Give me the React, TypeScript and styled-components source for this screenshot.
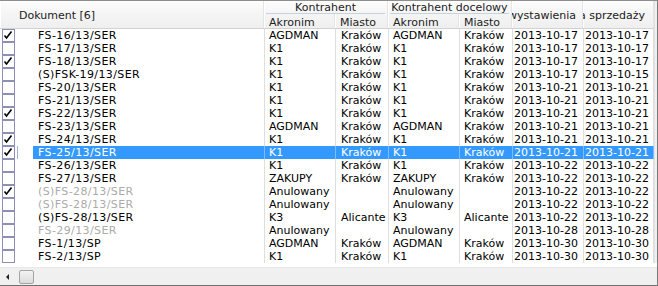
import React from "react";
import styled, { createGlobalStyle, css } from "styled-components";

const GlobalStyle = createGlobalStyle`
  html, body {
    margin: 0;
    padding: 0;
    background: #ffffff;
  }
  body {
    font-family: "DejaVu Sans", Verdana, sans-serif;
    font-size: 11px;
    color: #000;
  }
`;

const COLUMNS = "17px 16px 231px 71px 53px 71px 53px 71px 71px";

type Doc = {
  checked: boolean;
  number: string;
  muted?: boolean;
  acr: string;
  city: string;
  acr2: string;
  city2: string;
  issued: string;
  sold: string;
};

const docs: Doc[] = [
  { checked: true, number: "FS-16/13/SER", acr: "AGDMAN", city: "Kraków", acr2: "AGDMAN", city2: "Kraków", issued: "2013-10-17", sold: "2013-10-17" },
  { checked: false, number: "FS-17/13/SER", acr: "K1", city: "Kraków", acr2: "K1", city2: "Kraków", issued: "2013-10-17", sold: "2013-10-17" },
  { checked: true, number: "FS-18/13/SER", acr: "K1", city: "Kraków", acr2: "K1", city2: "Kraków", issued: "2013-10-17", sold: "2013-10-17" },
  { checked: false, number: "(S)FSK-19/13/SER", acr: "K1", city: "Kraków", acr2: "K1", city2: "Kraków", issued: "2013-10-17", sold: "2013-10-15" },
  { checked: false, number: "FS-20/13/SER", acr: "K1", city: "Kraków", acr2: "K1", city2: "Kraków", issued: "2013-10-21", sold: "2013-10-21" },
  { checked: false, number: "FS-21/13/SER", acr: "K1", city: "Kraków", acr2: "K1", city2: "Kraków", issued: "2013-10-21", sold: "2013-10-21" },
  { checked: true, number: "FS-22/13/SER", acr: "K1", city: "Kraków", acr2: "K1", city2: "Kraków", issued: "2013-10-21", sold: "2013-10-21" },
  { checked: false, number: "FS-23/13/SER", acr: "AGDMAN", city: "Kraków", acr2: "AGDMAN", city2: "Kraków", issued: "2013-10-21", sold: "2013-10-21" },
  { checked: true, number: "FS-24/13/SER", acr: "K1", city: "Kraków", acr2: "K1", city2: "Kraków", issued: "2013-10-21", sold: "2013-10-21" },
  { checked: true, number: "FS-25/13/SER", acr: "K1", city: "Kraków", acr2: "K1", city2: "Kraków", issued: "2013-10-21", sold: "2013-10-21" },
  { checked: false, number: "FS-26/13/SER", acr: "K1", city: "Kraków", acr2: "K1", city2: "Kraków", issued: "2013-10-22", sold: "2013-10-22" },
  { checked: false, number: "FS-27/13/SER", acr: "ZAKUPY", city: "Kraków", acr2: "ZAKUPY", city2: "Kraków", issued: "2013-10-22", sold: "2013-10-22" },
  { checked: true, number: "(S)FS-28/13/SER", muted: true, acr: "Anulowany", city: "", acr2: "Anulowany", city2: "", issued: "2013-10-22", sold: "2013-10-22" },
  { checked: false, number: "(S)FS-28/13/SER", muted: true, acr: "Anulowany", city: "", acr2: "Anulowany", city2: "", issued: "2013-10-22", sold: "2013-10-22" },
  { checked: false, number: "(S)FS-28/13/SER", acr: "K3", city: "Alicante", acr2: "K3", city2: "Alicante", issued: "2013-10-22", sold: "2013-10-22" },
  { checked: false, number: "FS-29/13/SER", muted: true, acr: "Anulowany", city: "", acr2: "Anulowany", city2: "", issued: "2013-10-28", sold: "2013-10-28" },
  { checked: false, number: "FS-1/13/SP", acr: "AGDMAN", city: "Kraków", acr2: "AGDMAN", city2: "Kraków", issued: "2013-10-30", sold: "2013-10-30" },
  { checked: false, number: "FS-2/13/SP", acr: "K1", city: "Kraków", acr2: "K1", city2: "Kraków", issued: "2013-10-30", sold: "2013-10-30" },
];

const SELECTED = 9;

const Frame = styled.div`
  width: 658px;
  height: 286px;
  box-sizing: border-box;
  border-top: 1px solid #8e8e8e;
  border-bottom: 1px solid #6f6f6f;
  border-right: 1px solid #7a7a7a;
  display: flex;
  flex-direction: column;
  background: #fff;
  overflow: hidden;
`;

const Viewport = styled.div`
  flex: 1;
  display: flex;
  min-height: 0;
`;

const Table = styled.div`
  width: 654px;
  display: flex;
  flex-direction: column;
`;

const RightStrip = styled.div`
  flex: 1;
  background: #f0f0f0;
  border-left: 1px solid #e2e2e2;
`;

const Header = styled.div`
  display: grid;
  grid-template-columns: ${COLUMNS};
  grid-template-rows: 13px 14px;
  height: 28px;
  box-sizing: border-box;
  border-bottom: 1px solid #d2d2d2;
  background: linear-gradient(to bottom, #fdfdfd 0%, #f6f6f6 40%, #efefef 100%);
  color: #222;
`;

const HeaderCell = styled.div<{ $col: string; $row: string; $align?: "start" | "end"; $pad?: number }>`
  grid-column: ${(p) => p.$col};
  grid-row: ${(p) => p.$row};
  display: flex;
  align-items: center;
  justify-content: ${(p) => (p.$align === "end" ? "flex-end" : "flex-start")};
  padding: 2px ${(p) => (p.$align === "end" ? p.$pad ?? 6 : 0)}px 0 ${(p) => (p.$align === "end" ? 0 : p.$pad ?? 0)}px;
  white-space: nowrap;
  overflow: hidden;
  border-right: 1px solid #e4e4e4;
  box-shadow: inset 1px 0 0 #ffffff;
  line-height: 13px;
`;

const GroupCell = styled.div<{ $col: string }>`
  grid-column: ${(p) => p.$col};
  grid-row: 1;
  position: relative;
  display: flex;
  justify-content: center;
  align-items: flex-end;
  padding-top: 1px;
  white-space: nowrap;
  overflow: hidden;
  line-height: 12px;
  border-right: 1px solid #e4e4e4;
  box-shadow: inset 1px 0 0 #ffffff;

  &::after {
    content: "";
    position: absolute;
    left: 2px;
    right: 2px;
    bottom: 0;
    height: 1px;
    background: #c4d3e2;
  }
`;

const Body = styled.div`
  display: flex;
  flex-direction: column;
  flex: 1;
`;

const Row = styled.div`
  display: grid;
  grid-template-columns: ${COLUMNS};
  height: 13px;
  line-height: 13px;
`;

const CheckCell = styled.div`
  display: flex;
  align-items: flex-start;
  padding-left: 2px;
`;

const Box = styled.div`
  width: 13px;
  height: 13px;
  box-sizing: border-box;
  border: 1px solid #8f8fb6;
  background: #fff;
  display: flex;
  align-items: center;
  justify-content: flex-start;
`;

const Indent = styled.div<{ $focus?: boolean }>`
  ${(p) =>
    p.$focus &&
    css`
      border-left: 1px solid #9ab4d6;
    `}
`;

const Cell = styled.div<{ $selected?: boolean; $sep?: boolean; $pad?: number; $muted?: boolean; $last?: boolean; $wide?: boolean }>`
  padding-left: ${(p) => p.$pad ?? 4}px;
  white-space: nowrap;
  overflow: hidden;
  letter-spacing: ${(p) => (p.$wide ? "0.4px" : "0")};
  color: ${(p) => (p.$selected ? "#fff" : p.$muted ? "#ababab" : "#000")};
  background: ${(p) => (p.$selected ? "#3399ff" : "transparent")};
  ${(p) =>
    p.$sep &&
    css`
      border-left: 1px solid ${p.$selected ? "#7fbcff" : "#dedede"};
    `}
  ${(p) =>
    p.$last &&
    css`
      border-right: 1px solid ${p.$selected ? "#7fbcff" : "#dedede"};
    `}
`;

const HScroll = styled.div`
  height: 17px;
  background: #f0f0f0;
  border-top: 1px solid #e8e8e8;
  display: flex;
  align-items: center;
  padding-left: 6px;
  margin-top: 4px;
`;

const Arrow = styled.div`
  width: 0;
  height: 0;
  border-top: 3px solid transparent;
  border-bottom: 3px solid transparent;
  border-right: 3px solid #222;
  margin-right: 10px;
`;

const Thumb = styled.div`
  width: 15px;
  height: 14px;
  box-sizing: border-box;
  border: 1px solid #a4a4a4;
  border-radius: 2px;
  background: linear-gradient(to bottom, #f2f2f2, #dcdcdc);
`;

const Check: React.FC = () => (
  <svg width="11" height="11" viewBox="0 0 11 11">
    <path d="M1.5 5.5 L3.5 8 L8.5 1.5" fill="none" stroke="#000" strokeWidth="1.6" />
  </svg>
);

const App: React.FC = () => (
  <>
    <GlobalStyle />
    <Frame>
      <Viewport>
        <Table>
          <Header>
            <HeaderCell $col="1 / 4" $row="1 / 3" $pad={19}>
              Dokument [6]
            </HeaderCell>
            <GroupCell $col="4 / 6">Kontrahent</GroupCell>
            <GroupCell $col="6 / 8">Kontrahent docelowy</GroupCell>
            <HeaderCell $col="4" $row="2" $pad={5}>
              Akronim
            </HeaderCell>
            <HeaderCell $col="5" $row="2" $pad={5}>
              Miasto
            </HeaderCell>
            <HeaderCell $col="6" $row="2" $pad={5}>
              Akronim
            </HeaderCell>
            <HeaderCell $col="7" $row="2" $pad={5}>
              Miasto
            </HeaderCell>
            <HeaderCell $col="8" $row="1 / 3" $align="end" $pad={6}>
              Data wystawienia
            </HeaderCell>
            <HeaderCell $col="9" $row="1 / 3" $align="end" $pad={8}>
              Data sprzedaży
            </HeaderCell>
          </Header>
          <Body>
            {docs.map((d, i) => {
              const sel = i === SELECTED;
              return (
                <Row key={i}>
                  <CheckCell>
                    <Box>{d.checked && <Check />}</Box>
                  </CheckCell>
                  <Indent $focus={sel} />
                  <Cell $selected={sel} $muted={d.muted} $pad={5} $wide>
                    {d.number}
                  </Cell>
                  <Cell $selected={sel} $sep>
                    {d.acr}
                  </Cell>
                  <Cell $selected={sel} $sep $pad={5}>
                    {d.city}
                  </Cell>
                  <Cell $selected={sel} $sep>
                    {d.acr2}
                  </Cell>
                  <Cell $selected={sel} $sep>
                    {d.city2}
                  </Cell>
                  <Cell $selected={sel} $sep $pad={1}>
                    {d.issued}
                  </Cell>
                  <Cell $selected={sel} $sep $last $pad={1}>
                    {d.sold}
                  </Cell>
                </Row>
              );
            })}
          </Body>
        </Table>
        <RightStrip />
      </Viewport>
      <HScroll>
        <Arrow />
        <Thumb />
      </HScroll>
    </Frame>
  </>
);

export default App;
